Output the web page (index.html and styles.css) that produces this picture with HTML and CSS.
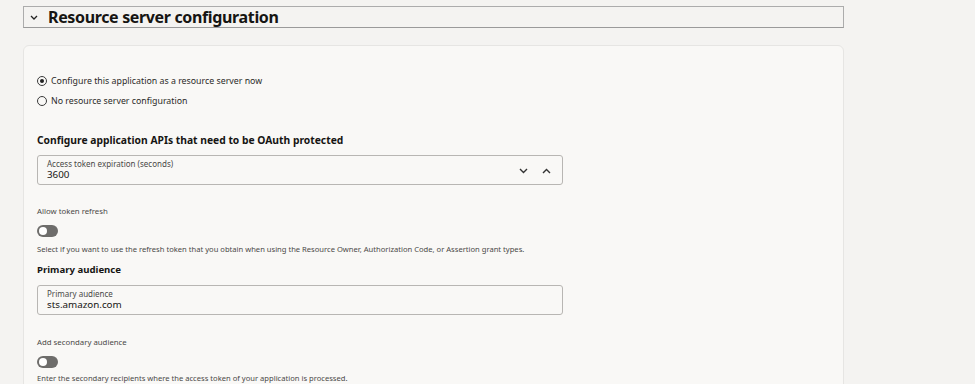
FILE: index.html
```html
<!DOCTYPE html>
<html>
<head>
    <meta charset="UTF-8">
    <title>Resource server configuration</title>
    <link rel="stylesheet" href="styles.css">
</head>
<body>
    <div class="page">
        <div class="section-header">
            <svg class="chevron" width="8" height="5" viewBox="0 0 8 5"><path d="M1 1 L4 4 L7 1" fill="none" stroke="#222" stroke-width="1.3"/></svg>
            <h1>Resource server configuration</h1>
        </div>

        <div class="card">
            <div class="radio-group">
                <label class="radio checked"><span class="dot"></span>Configure this application as a resource server now</label>
                <label class="radio"><span class="dot"></span>No resource server configuration</label>
            </div>

            <h2>Configure application APIs that need to be OAuth protected</h2>

            <div class="field">
                <div class="field-text">
                    <span class="field-label">Access token expiration (seconds)</span>
                    <span class="field-value">3600</span>
                </div>
                <div class="spin">
                    <svg width="9" height="6" viewBox="0 0 9 6"><path d="M1 1 L4.5 4.5 L8 1" fill="none" stroke="#333" stroke-width="1.4"/></svg>
                    <svg width="9" height="6" viewBox="0 0 9 6"><path d="M1 5 L4.5 1.5 L8 5" fill="none" stroke="#333" stroke-width="1.4"/></svg>
                </div>
            </div>

            <div class="switch-block">
                <div class="small-label">Allow token refresh</div>
                <div class="toggle"><span class="knob"></span></div>
                <div class="help">Select if you want to use the refresh token that you obtain when using the Resource Owner, Authorization Code, or Assertion grant types.</div>
            </div>

            <h3>Primary audience</h3>
            <div class="field">
                <div class="field-text">
                    <span class="field-label">Primary audience</span>
                    <span class="field-value">sts.amazon.com</span>
                </div>
            </div>

            <div class="switch-block second">
                <div class="small-label">Add secondary audience</div>
                <div class="toggle"><span class="knob"></span></div>
                <div class="help">Enter the secondary recipients where the access token of your application is processed.</div>
            </div>
        </div>
    </div>
</body>
</html>
```

FILE: styles.css
```css
body {
    margin: 0;
    background: #f4f3f1;
    font-family: "Noto Sans", "Open Sans", sans-serif;
    color: #161513;
    overflow: hidden;
}
.page {
    width: 821px;
    padding: 6px 0 0 23px;
}
.section-header {
    display: flex;
    align-items: center;
    height: 20px;
    border: 1px solid #acacac;
    border-bottom-color: #9a9a9a;
}
.chevron {
    margin: 1px 0 0 6px;
}
h1 {
    margin: 0 0 0 10px;
    font-size: 16px;
    font-weight: 700;
    line-height: 20px;
    letter-spacing: -0.35px;
}
.card {
    margin-top: 17px;
    height: 400px;
    background: #f9f8f6;
    border: 1px solid #e6e5e3;
    border-radius: 6px;
    padding: 28px 13px 0;
}
.radio-group {
    display: flex;
    flex-direction: column;
    gap: 6px;
}
.radio {
    display: flex;
    align-items: center;
    gap: 4px;
    font-size: 8.8px;
    line-height: 14px;
    color: #2b2a28;
}
.dot {
    width: 8px;
    height: 8px;
    border: 1px solid #3a3a3a;
    border-radius: 50%;
    position: relative;
}
.radio.checked .dot::after {
    content: "";
    position: absolute;
    left: 2px;
    top: 2px;
    width: 4px;
    height: 4px;
    border-radius: 50%;
    background: #222;
}
h2 {
    margin: 25px 0 8px;
    font-size: 10.3px;
    font-weight: 700;
    line-height: 14px;
}
h3 {
    margin: 8px 0 8px;
    font-size: 9.6px;
    font-weight: 700;
    line-height: 14px;
}
.field {
    width: 524px;
    height: 28px;
    border: 1px solid #b8b6b3;
    border-radius: 3px;
    display: flex;
    align-items: center;
    justify-content: space-between;
}
.field-text {
    display: flex;
    flex-direction: column;
    padding-left: 9px;
}
.field-label {
    font-size: 8px;
    line-height: 10px;
    color: #4a4947;
}
.field-value {
    font-size: 9.8px;
    line-height: 12px;
    color: #161513;
}
.spin {
    display: flex;
    gap: 14px;
    padding-right: 11px;
    margin-top: 1px;
}
.switch-block {
    padding-top: 20px;
}
.small-label {
    font-size: 7.8px;
    line-height: 12px;
    color: #4a4947;
}
.toggle {
    margin-top: 8px;
    width: 21px;
    height: 12px;
    border-radius: 6px;
    background: #6e6d6b;
    position: relative;
}
.knob {
    position: absolute;
    left: 2px;
    top: 2px;
    width: 8px;
    height: 8px;
    border-radius: 50%;
    background: #fff;
}
.help {
    margin-top: 6px;
    font-size: 7.6px;
    line-height: 12px;
    color: #4a4947;
}
.second {
    padding-top: 21px;
}
.second .help {
    margin-top: 4px;
}
```
